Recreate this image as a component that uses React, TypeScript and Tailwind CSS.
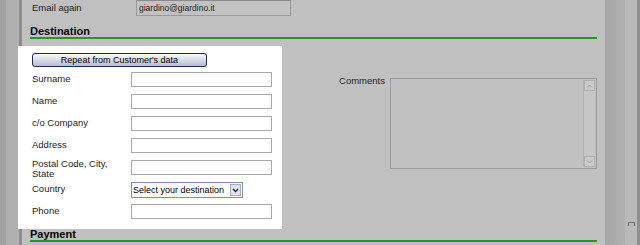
const rows = [
  { label: "Surname" },
  { label: "Name" },
  { label: "c/o Company" },
  { label: "Address" },
  { label: "Postal Code, City, State", twoLine: true },
  { label: "Country", select: true },
  { label: "Phone" },
];

const Field = () => (
  <div className="w-[141px] h-[15px] bg-white border border-[#a9a9a9]" />
);

const CountrySelect = () => (
  <div className="w-[112px] h-[16px] bg-white border border-[#7f8fa9] flex items-center">
    <span className="flex-1 pl-[1px] text-[9px] leading-none text-black whitespace-nowrap">
      Select your destination
    </span>
    <div className="w-[11px] h-[12px] mr-[1px] bg-[#dfe3ee] border border-[#a4adc4] flex items-center justify-center">
      <svg width="7" height="5" viewBox="0 0 7 5">
        <path d="M1 1 L3.5 3.5 L6 1" stroke="#1f2d4d" strokeWidth="1.4" fill="none" />
      </svg>
    </div>
  </div>
);

const Heading = ({ title }: { title: string }) => (
  <div className="border-b-2 border-[#1f9a1f] text-[11px] leading-[12px] font-bold text-black">
    {title}
  </div>
);

const App = () => {
  return (
    <div className="w-[640px] h-[245px] overflow-hidden flex font-['Liberation_Sans',Arial,sans-serif] text-[#1e1e1e]">
      {/* left frame */}
      <div className="w-[6px] bg-[#a2a2a2]" />
      <div className="w-[13px] bg-[#b0b0b0]" />
      <div className="w-[3px] bg-[#8c8c8c]" />

      {/* main */}
      <div className="w-[583px] bg-[#c0c0c0] px-[8px] flex flex-col">
        {/* email again */}
        <div className="h-[16px] flex items-center">
          <span className="w-[106px] pl-[2px] text-[9.5px]">Email again</span>
          <div className="w-[155px] h-[16px] border border-[#9a9a9a] border-t-[#8a8a8a] bg-[#c2c2c2] flex items-center pl-[2px] text-[8.5px] text-[#222]">
            giardino@giardino.it
          </div>
        </div>

        <div className="mt-[9px]">
          <Heading title="Destination" />
        </div>

        <div className="flex mt-[7px]">
          {/* highlighted panel */}
          <div className="-ml-[12px] w-[264px] h-[183px] bg-white pl-[14px] pt-[7px]">
            <button className="block w-[175px] h-[14px] rounded-[3px] border border-[#1d2b55] bg-gradient-to-b from-[#fbfbfb] to-[#b9bbcd] text-[9px] leading-none text-black">
              Repeat from Customer's data
            </button>
            <div className="mt-[5px] flex flex-col">
              {rows.map((r) => (
                <div key={r.label} className="h-[22px] flex items-start">
                  {r.twoLine ? (
                    <span className="w-[99px] text-[9.5px] leading-[10px] -mt-[1px]">
                      Postal Code, City,
                      <br />
                      State
                    </span>
                  ) : (
                    <span className="w-[99px] h-[15px] flex items-center text-[9.5px]">
                      {r.label}
                    </span>
                  )}
                  {r.select ? <CountrySelect /> : <Field />}
                </div>
              ))}
            </div>
          </div>

          {/* comments */}
          <div className="flex-1 flex justify-end items-start mt-[32px]">
            <span className="text-[9.5px] leading-[10px] mr-[5px] -mt-[2px]">Comments</span>
            <div className="w-[207px] h-[91px] border border-[#9c9c9c] bg-[#c1c1c1] flex justify-end p-[1px]">
              <div className="w-[12px] border-l border-[#b4b4b4] bg-[#c6c6c6] flex flex-col justify-between">
                <div className="h-[11px] border border-[#b0b0b0] bg-[#cacaca] flex items-center justify-center">
                  <svg width="7" height="4" viewBox="0 0 7 4">
                    <path d="M1 3.5 L3.5 1 L6 3.5" stroke="#9a9a9a" strokeWidth="1" fill="none" />
                  </svg>
                </div>
                <div className="h-[11px] border border-[#b0b0b0] bg-[#cacaca] flex items-center justify-center">
                  <svg width="7" height="4" viewBox="0 0 7 4">
                    <path d="M1 0.5 L3.5 3 L6 0.5" stroke="#9a9a9a" strokeWidth="1" fill="none" />
                  </svg>
                </div>
              </div>
            </div>
          </div>
        </div>

        <div className="-mt-[1px]">
          <Heading title="Payment" />
        </div>
      </div>

      {/* right frame */}
      <div className="w-[20px] bg-gradient-to-r from-[#a6a6a6] to-[#b0b0b0]" />
      <div className="w-[12px] bg-[#b9b9b9] flex flex-col items-center pt-[222px]">
        <div className="w-[7px] h-[4px] border-t border-l border-r border-[#6e6e6e]" />
      </div>
      <div className="w-[3px] bg-[#8f8f8f]" />
    </div>
  );
};

export default App;
